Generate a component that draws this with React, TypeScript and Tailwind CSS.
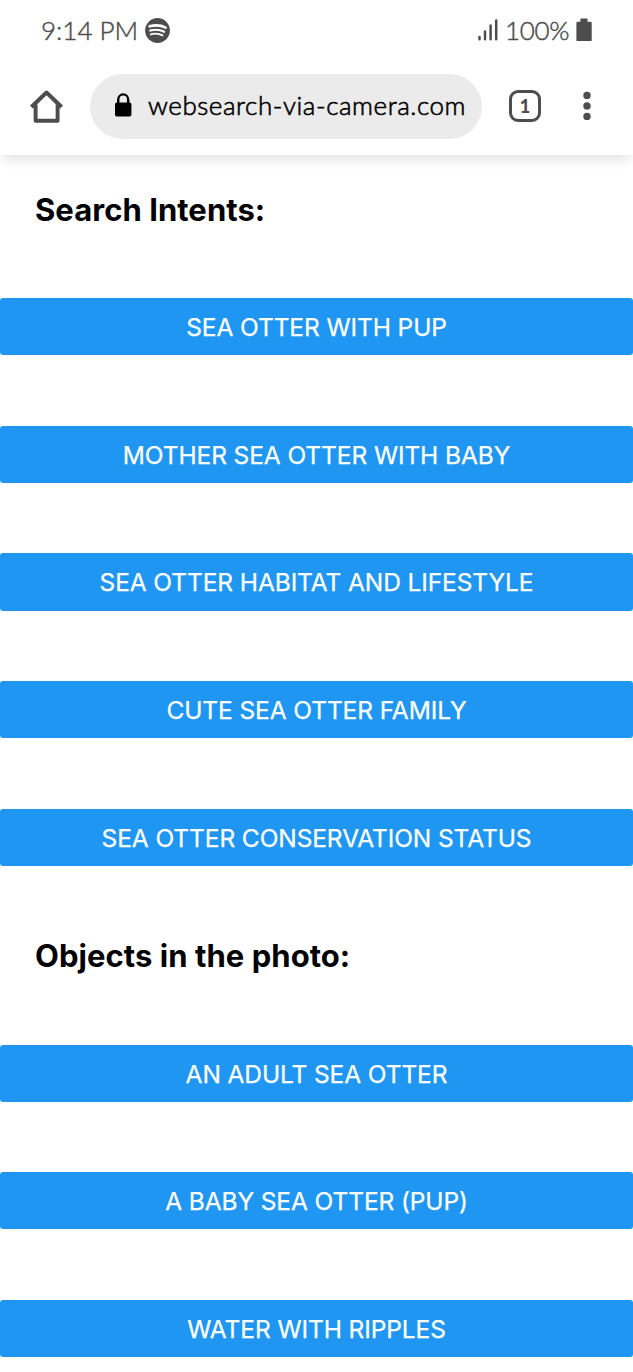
const intents = [
  'SEA OTTER WITH PUP',
  'MOTHER SEA OTTER WITH BABY',
  'SEA OTTER HABITAT AND LIFESTYLE',
  'CUTE SEA OTTER FAMILY',
  'SEA OTTER CONSERVATION STATUS',
];

const objects = ['AN ADULT SEA OTTER', 'A BABY SEA OTTER (PUP)', 'WATER WITH RIPPLES'];

function ButtonList({ items }: { items: string[] }) {
  return (
    <div className="flex flex-col gap-[70.4px]">
      {items.map((label) => (
        <button
          key={label}
          className="flex h-[57.2px] w-full items-center justify-center rounded-[3px] bg-[#2096f3] pt-px text-white"
        >
          <span className="whitespace-nowrap text-[24.5px] leading-8 tracking-[-0.1px] [-webkit-text-stroke:0.25px_white]">
            {label}
          </span>
        </button>
      ))}
    </div>
  );
}

function StatusBar() {
  return (
    <div className="flex h-[60px] items-center justify-between px-[41px] font-['Lato','Liberation_Sans',sans-serif] text-[26px] font-light leading-8 text-[#4d4d4d] [-webkit-text-stroke:0.45px_#4d4d4d]">
      <div className="flex items-center gap-2">
        <span className="w-[96px] whitespace-nowrap">9:14 PM</span>
        <svg width="25" height="25" viewBox="0 0 25 25" fill="none">
          <circle cx="12.5" cy="12.5" r="12.4" fill="#4d4d4d" />
          <g stroke="#fff" strokeLinecap="round">
            <path d="M4.6 8.3C10 6.8 16 7.2 20.6 9.6" strokeWidth="2.6" />
            <path d="M5.2 12.6C10 11.2 15 11.7 19.2 13.7" strokeWidth="2.1" />
            <path d="M5.8 16.3C10 15.2 14 15.6 17.6 17.4" strokeWidth="1.8" />
          </g>
        </svg>
      </div>
      <div className="flex items-center">
        <svg width="20" height="22" viewBox="0 0 20 22" stroke="#4d4d4d" strokeWidth="2.5" strokeLinecap="round">
          <path d="M1.5 18v2.200M7 12.500v7.700M12.600 6.500v13.700M18.200 1.500v18.700" />
        </svg>
        <span className="ml-[7px] w-[65px] whitespace-nowrap tracking-[-0.3px]">100%</span>
        <svg className="ml-[6px]" width="16" height="24" viewBox="0 0 16 24" fill="#4d4d4d">
          <path d="M5 .5h6.5v3.2h3q1.2 0 1.2 1.2v17q0 1.2-1.2 1.2H1.6Q.4 23.1.4 21.9V4.9Q.4 3.700 1.600 3.700H4.400V1.100Q4.400.5 5 .5z" />
        </svg>
      </div>
    </div>
  );
}

function AddressBar() {
  return (
    <div className="flex h-[95px] items-start pt-[14px]">
      <svg className="ml-[30px] mt-[15px] shrink-0" width="33" height="34" viewBox="0 0 33 34" fill="none" stroke="#4d4d4d" strokeWidth="3.9" strokeLinejoin="round">
        <path d="M1.400 18L16.500 3.500l15.100 14.500" />
        <path d="M5.600 15.500v16.200h22V15.500" />
      </svg>
      <div className="ml-[27px] flex h-[65px] w-[392px] shrink-0 items-center rounded-full bg-[#ebebeb] pl-6">
        <svg className="mb-[3px] shrink-0" width="18" height="26" viewBox="0 0 18 26" fill="none">
          <rect x="1" y="10.5" width="16.4" height="14" rx="1.8" fill="#000" />
          <path d="M4.200 11.500V7.800a5 5.400 0 0 1 10 0v3.700" stroke="#000" strokeWidth="2.400" />
        </svg>
        <span className="mb-1 ml-4 whitespace-nowrap font-['Lato','Liberation_Sans',sans-serif] text-[26px] font-light leading-8 tracking-[0.55px] text-black [-webkit-text-stroke:0.6px_black]">
          websearch-via-camera.com
        </span>
      </div>
      <div className="ml-[27px] mt-[16px] flex h-8 w-8 shrink-0 items-center justify-center rounded-[9px] border-[3.5px] border-[#4d4d4d] font-['Lato','Liberation_Sans',sans-serif] text-[18px] font-black leading-none text-[#4d4d4d]">
        1
      </div>
      <svg className="ml-[42px] mt-[17px] shrink-0" width="8" height="30" viewBox="0 0 8 30" fill="#4d4d4d">
        <circle cx="4" cy="4.4" r="3.7" />
        <circle cx="4" cy="14.9" r="3.7" />
        <circle cx="4" cy="25.4" r="3.7" />
      </svg>
    </div>
  );
}

export default function App() {
  return (
    <div className="h-[1372px] w-full overflow-hidden bg-white font-['Inter','Liberation_Sans',sans-serif]">
      <header className="relative z-10 h-[155px] bg-white shadow-[0_6px_12px_-2px_rgba(0,0,0,0.12)]">
        <StatusBar />
        <AddressBar />
      </header>
      <main>
        <h1 className="pb-[68.2px] pl-[35px] pt-[35px] text-[31px] font-bold leading-10 tracking-[0.05px] text-black">
          Search Intents:
        </h1>
        <ButtonList items={intents} />
        <h1 className="pb-[69px] pl-[35px] pt-[70px] text-[31px] font-bold leading-10 tracking-[0.05px] text-black">
          Objects in the photo:
        </h1>
        <ButtonList items={objects} />
      </main>
    </div>
  );
}
